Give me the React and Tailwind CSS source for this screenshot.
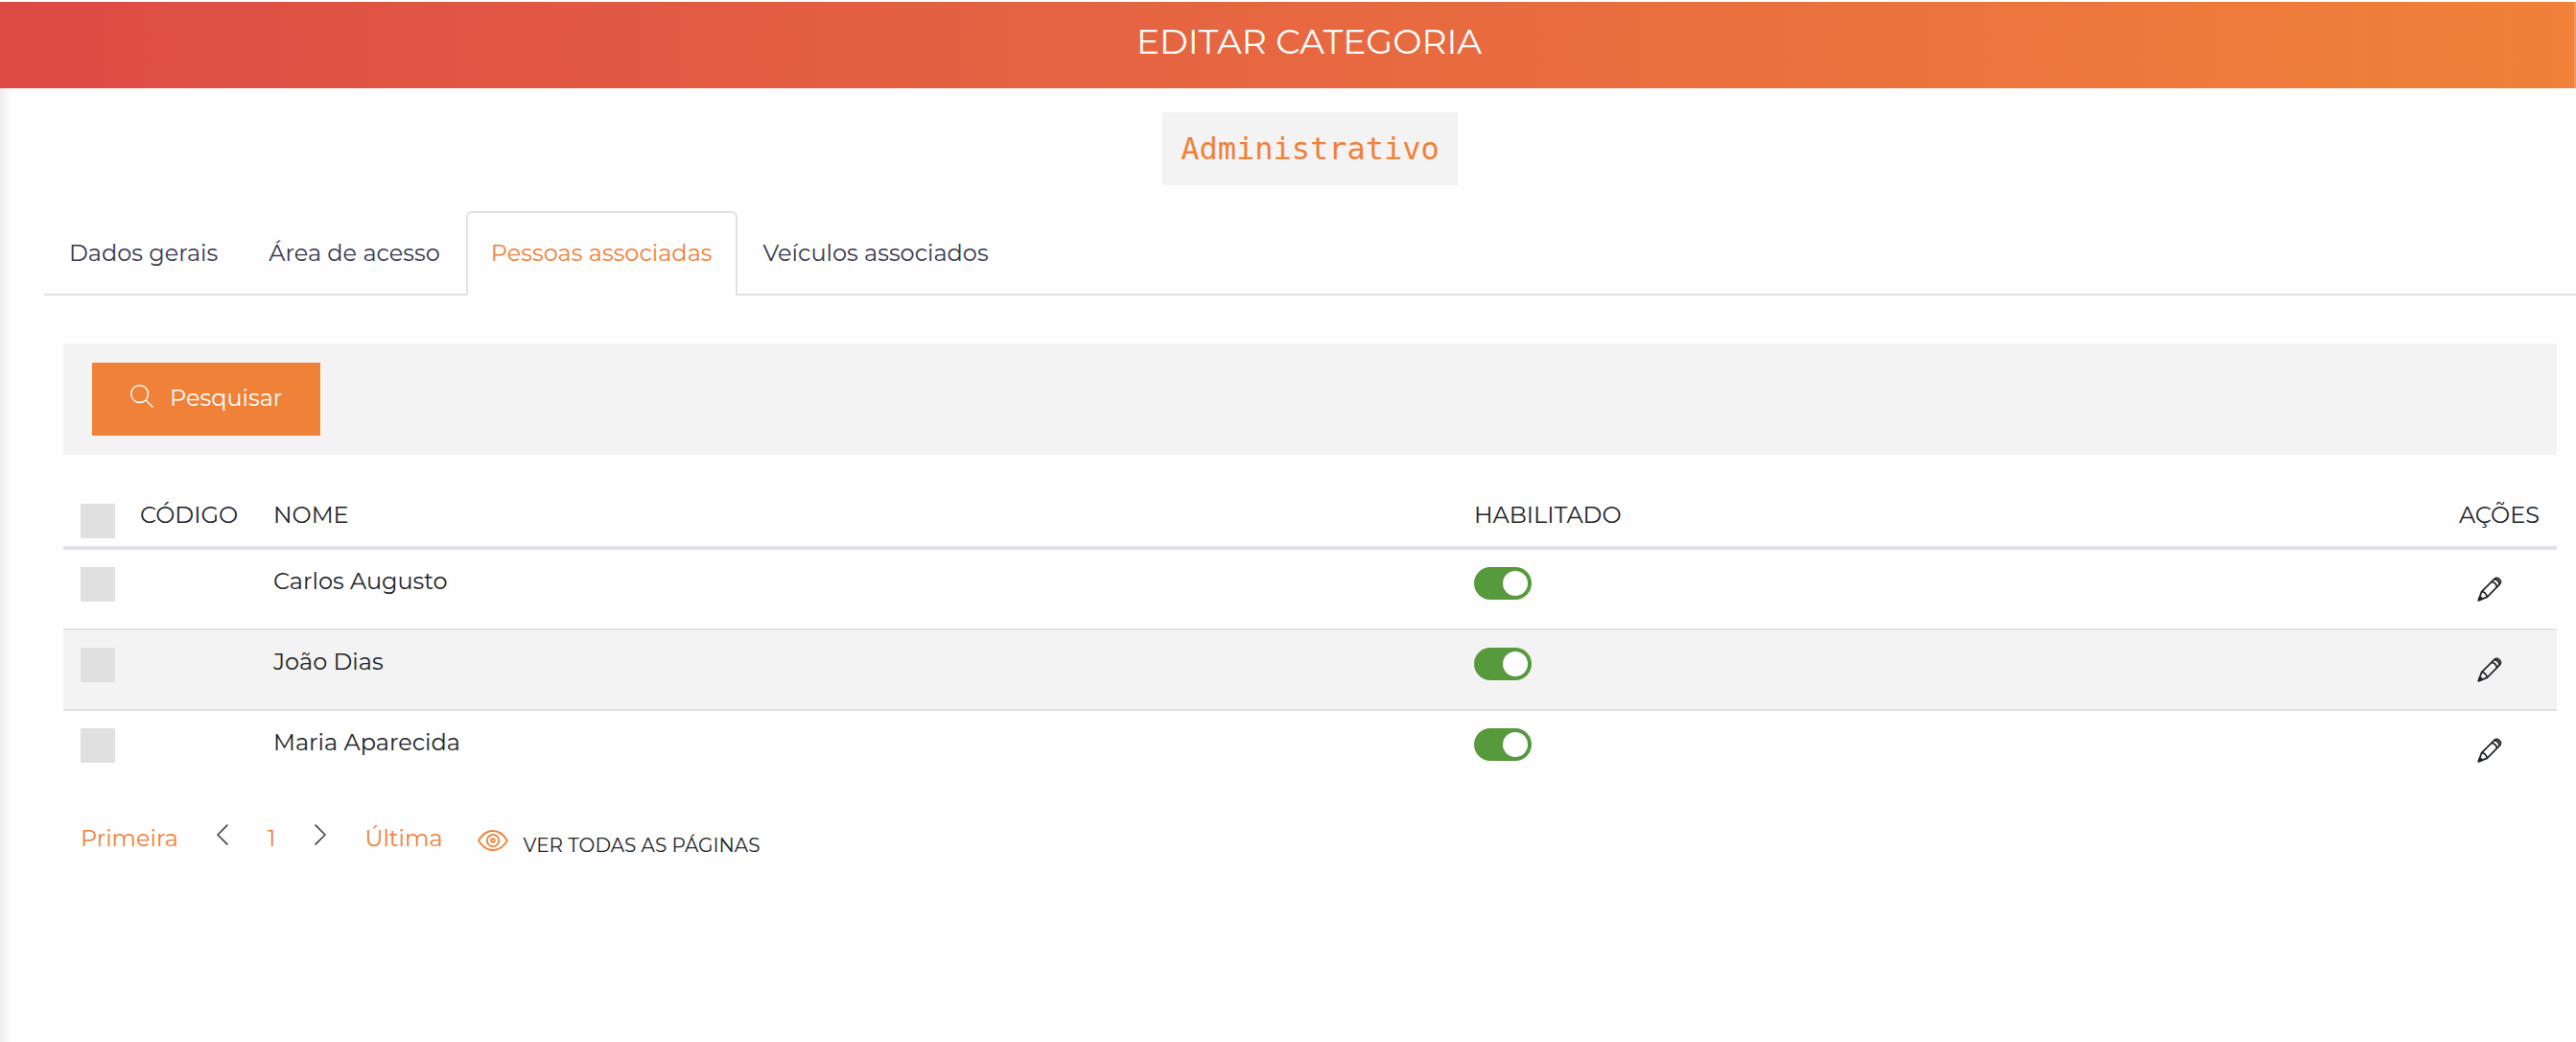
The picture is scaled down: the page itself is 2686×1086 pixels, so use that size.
import { useState } from 'react'

const TABS = ['Dados gerais', 'Área de acesso', 'Pessoas associadas', 'Veículos associados']

const PEOPLE = [
  { id: 1, code: '', name: 'Carlos Augusto' },
  { id: 2, code: '', name: 'João Dias' },
  { id: 3, code: '', name: 'Maria Aparecida' }
]

const SearchIcon = () => (
  <svg className="mb-0.5 w-6 h-6" fill="none" stroke="currentColor" strokeWidth="1.4" viewBox="0 0 24 24">
    <circle cx="9.6" cy="9.6" r="8.9" />
    <path d="M16 16l7.4 7.4" />
  </svg>
)

const PencilIcon = () => (
  <svg className="w-[26px] h-[26px]" fill="none" stroke="currentColor" strokeWidth="1.7" strokeLinejoin="round" viewBox="0 0 26 26">
    <path d="M1.4 24.6l3.2-9L17.4 2.8c1.5-1.6 3.6-1.9 5.200-.4l.8.8c1.500 1.600 1.200 3.700-.4 5.200L10.200 21.400z" />
    <path d="M4.600 15.600c3 .2 5.300 2.700 5.600 5.800M14.800 5.400c3 .3 5.400 2.700 5.700 5.700M17.800 2.600c3 .3 5.100 2.600 5.400 5.600" />
    <path d="M1.400 24.600l1.400-4 2.700 2.600z" fill="currentColor" />
  </svg>
)

const EyeIcon = () => (
  <svg className="w-8 h-[22px]" fill="none" stroke="currentColor" strokeWidth="1.8" viewBox="0 0 32 22">
    <path d="M1 11C5 4.500 10 1 16 1s11 3.500 15 10c-4 6.500-9 10-15 10S5 17.500 1 11z" />
    <circle cx="16" cy="11" r="6.200" />
    <circle cx="16" cy="11" r="1.800" />
  </svg>
)

const Chevron = ({ direction }) => (
  <svg className="w-3 h-[22px]" fill="none" stroke="currentColor" strokeWidth="1.5" viewBox="0 0 12 22">
    <path d={direction === 'left' ? 'M11.4.6L1 11l10.4 10.4' : 'M.6.6L11 11 .6 21.4'} />
  </svg>
)

const Checkbox = ({ label }) => (
  <input
    type="checkbox"
    aria-label={label}
    className="block w-9 h-9 appearance-none bg-[#e0e0e0] checked:bg-[#f08139]"
  />
)

const Toggle = ({ label }) => (
  <input
    type="checkbox"
    role="switch"
    aria-label={label}
    defaultChecked
    className="block w-[60px] h-[34px] appearance-none rounded-full bg-[#ccc] p-1 before:block before:size-[26px] before:rounded-full before:bg-white checked:bg-[#57993d] checked:before:ml-[26px]"
  />
)

const App = () => {
  const [activeTab, setActiveTab] = useState(2)

  return (
    <div className="min-h-screen flex flex-col bg-[#fefefe] pt-0.5 font-['Montserrat','Inter',sans-serif] text-[24px] leading-[29px] text-[#212529]">
      {/* Header */}
      <header className="h-[90px] pl-[46px] pt-[19px] border-r-2 border-white/20 bg-origin-border bg-linear-to-r from-[#dd4b45] to-[#f08139] text-center text-white">
        <h1 className="text-[36px] leading-[44px]">EDITAR CATEGORIA</h1>
      </header>

      <main className="grow pl-[46px] bg-linear-to-r from-[#ededed] to-transparent to-[12px] pt-[25px]">
        <div className="flex justify-center">
          <code className="bg-[#f3f3f3] px-[19px] py-[18px] font-['DejaVu_Sans_Mono',monospace] text-[32px] leading-[40px] text-[#f08139]">
            Administrativo
          </code>
        </div>

        {/* Tabs */}
        <div role="tablist" className="mt-[27px] flex gap-px border-b-2 border-[#dee2e6]">
          {TABS.map((tab, index) => (
            <button
              key={tab}
              type="button"
              role="tab"
              aria-selected={index === activeTab}
              onClick={() => setActiveTab(index)}
              className={
                index === activeTab
                  ? '-mb-0.5 h-[88px] px-6 pb-1 border-2 border-b-0 border-[#dee2e6] rounded-t-md bg-[#fefefe] text-[#f08139]'
                  : 'h-[86px] px-6 border-2 border-transparent text-[#3a3a50]'
              }
            >
              {tab}
            </button>
          ))}
        </div>

        <section className="mt-[50px] mx-5">
          <div className="bg-[#f3f3f3] px-[30px] py-5">
            <button type="button" className="flex items-center gap-[17px] h-[76px] px-10 pb-1 bg-[#f08139] text-white">
              <SearchIcon />
              Pesquisar
            </button>
          </div>

          {/* People */}
          <table className="mt-[30px] w-full border-separate border-spacing-0 text-left">
            <thead>
              <tr className="h-[69px] align-top *:border-b-4 *:border-[#dee2e6]">
                <th className="w-[62px] pl-[18px] pt-[21px]">
                  <Checkbox label="Selecionar todos" />
                </th>
                <th className="w-[139px] px-[18px] pt-[18px] font-normal">CÓDIGO</th>
                <th className="px-[18px] pt-[18px] font-normal">NOME</th>
                <th className="w-[39%] px-[18px] pt-[18px] font-normal">HABILITADO</th>
                <th className="w-[133px] px-[18px] pt-[18px] text-right font-normal">AÇÕES</th>
              </tr>
            </thead>
            <tbody>
              {PEOPLE.map(person => (
                <tr
                  key={person.id}
                  className="h-[84px] first:h-[82px] align-top even:bg-[#f3f3f3] *:border-t-2 *:border-[#dee2e6] first:*:border-t-0"
                >
                  <td className="pl-[18px] pt-[18px]">
                    <Checkbox label={`Selecionar ${person.name}`} />
                  </td>
                  <td className="px-[18px] pt-[18px]">{person.code}</td>
                  <td className="px-[18px] pt-[18px]">{person.name}</td>
                  <td className="px-[18px] pt-[18px]">
                    <Toggle label={`Habilitar ${person.name}`} />
                  </td>
                  <td className="pr-[57px] pt-[28px]">
                    <button type="button" aria-label={`Editar ${person.name}`} className="block ml-auto">
                      <PencilIcon />
                    </button>
                  </td>
                </tr>
              ))}
            </tbody>
          </table>

          {/* Pagination */}
          <nav className="mt-9 ml-[18px] flex items-start text-[#f08139]">
            <a href="#primeira">Primeira</a>
            <button type="button" aria-label="Página anterior" className="ml-10 text-[#3a3a50]">
              <Chevron direction="left" />
            </button>
            <a href="#1" className="ml-[41px]">1</a>
            <button type="button" aria-label="Próxima página" className="ml-[41px] text-[#3a3a50]">
              <Chevron direction="right" />
            </button>
            <a href="#ultima" className="ml-10">Última</a>
            <button type="button" className="ml-9 flex items-start gap-4 pt-1.5">
              <EyeIcon />
              <span className="pt-1 text-[20px] leading-[24px] text-[#212529]">VER TODAS AS PÁGINAS</span>
            </button>
          </nav>
        </section>
      </main>
    </div>
  )
}

export default App
